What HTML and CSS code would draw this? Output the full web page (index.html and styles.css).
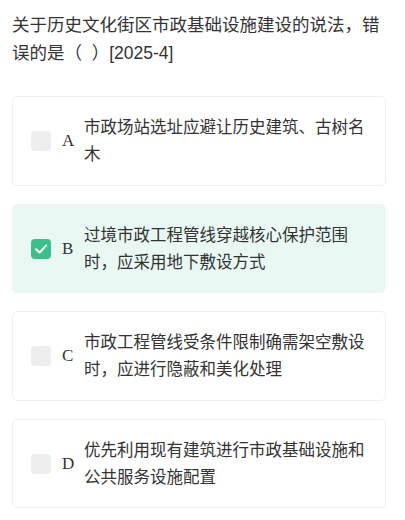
FILE: index.html
```html
<!DOCTYPE html>
<html lang="zh-CN">
<head>
<meta charset="utf-8">
<link rel="stylesheet" href="styles.css">
</head>
<body>
<div class="page">
  <div class="question">关于历史文化街区市政基础设施建设的说法，错误的是（&nbsp; ）[2025-4]</div>
  <div class="options">
    <div class="option">
      <span class="box"></span>
      <span class="letter">A</span>
      <span class="text">市政场站选址应避让历史建筑、古树名木</span>
    </div>
    <div class="option selected">
      <span class="box">
        <svg viewBox="0 0 20 20" width="20" height="20"><path d="M5 10.2 L8.6 13.6 L15.2 6.4" fill="none" stroke="#fff" stroke-width="2" stroke-linecap="round" stroke-linejoin="round"/></svg>
      </span>
      <span class="letter">B</span>
      <span class="text">过境市政工程管线穿越核心保护范围时，应采用地下敷设方式</span>
    </div>
    <div class="option">
      <span class="box"></span>
      <span class="letter">C</span>
      <span class="text">市政工程管线受条件限制确需架空敷设时，应进行隐蔽和美化处理</span>
    </div>
    <div class="option">
      <span class="box"></span>
      <span class="letter">D</span>
      <span class="text">优先利用现有建筑进行市政基础设施和公共服务设施配置</span>
    </div>
  </div>
</div>
</body>
</html>
```
FILE: styles.css
```css
html, body {
  margin: 0;
  padding: 0;
  background: #fff;
}
.page {
  width: 374px;
  padding: 11px 0 0 12px;
  font-family: "Liberation Sans", "Noto Sans CJK SC", sans-serif;
  color: #333;
}
.question {
  font-size: 17.5px;
  line-height: 28px;
  color: #333;
}
.options {
  margin-top: 29px;
  display: flex;
  flex-direction: column;
  gap: 18px;
}
.option {
  display: flex;
  align-items: center;
  padding: 17px 14px 16.5px 18px;
  border: 1px solid #f0f0f0;
  border-radius: 5px;
  background: #fff;
}
.option.selected {
  background: #e9f8f2;
  border-color: #e9f8f2;
}
.box {
  flex: 0 0 20px;
  width: 20px;
  height: 20px;
  border-radius: 4px;
  background: #eeeeee;
  display: flex;
}
.selected .box {
  background: #3cbf8d;
}
.letter {
  flex: 0 0 22px;
  margin-left: 11px;
  font-family: "Liberation Serif", "DejaVu Serif", serif;
  font-size: 17px;
  color: #333;
}
.text {
  flex: 1;
  font-size: 16.5px;
  line-height: 27px;
  color: #333;
}
```
